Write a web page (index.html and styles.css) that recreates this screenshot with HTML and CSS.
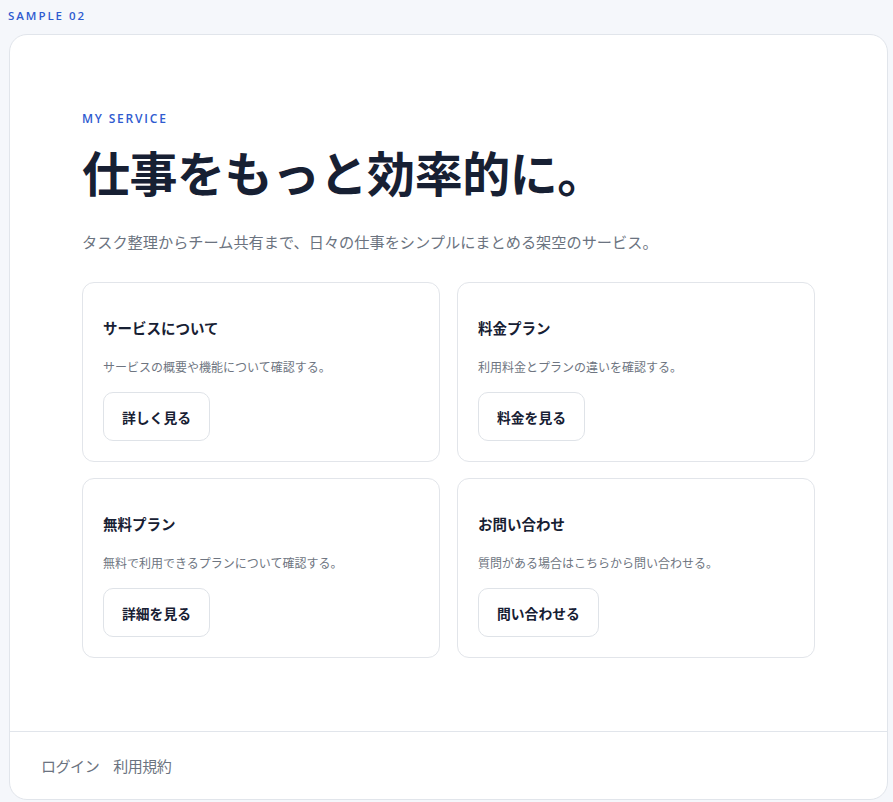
FILE: index.html
```html
<!DOCTYPE html>
<html lang="ja">
<head>
<meta charset="utf-8">
<title>Sample 02</title>
<link rel="stylesheet" href="styles.css">
</head>
<body>
<div class="sample-label">SAMPLE 02</div>
<div class="frame">
  <main class="main">
    <p class="eyebrow">MY SERVICE</p>
    <h1 class="title">仕事をもっと効率的に。</h1>
    <p class="lead">タスク整理からチーム共有まで、日々の仕事をシンプルにまとめる架空のサービス。</p>
    <div class="grid">
      <section class="card">
        <h2 class="card-title">サービスについて</h2>
        <p class="card-text">サービスの概要や機能について確認する。</p>
        <a class="btn">詳しく見る</a>
      </section>
      <section class="card">
        <h2 class="card-title">料金プラン</h2>
        <p class="card-text">利用料金とプランの違いを確認する。</p>
        <a class="btn">料金を見る</a>
      </section>
      <section class="card">
        <h2 class="card-title">無料プラン</h2>
        <p class="card-text">無料で利用できるプランについて確認する。</p>
        <a class="btn">詳細を見る</a>
      </section>
      <section class="card">
        <h2 class="card-title">お問い合わせ</h2>
        <p class="card-text">質問がある場合はこちらから問い合わせる。</p>
        <a class="btn">問い合わせる</a>
      </section>
    </div>
  </main>
  <footer class="footer">
    <a class="footer-link">ログイン</a>
    <a class="footer-link">利用規約</a>
  </footer>
</div>
</body>
</html>
```
FILE: styles.css
```css
* { box-sizing: border-box; }
html, body { margin: 0; padding: 0; }
body {
  background: #f5f7fb;
  font-family: "Noto Sans CJK JP", "Noto Sans", sans-serif;
  color: #172033;
  padding: 8px 5px 0 8px;
}
.sample-label {
  font-family: "Open Sans", "Noto Sans", sans-serif;
  font-size: 11.5px;
  font-weight: 600;
  letter-spacing: 0.17em;
  color: #2f5bd0;
  line-height: 16px;
  margin-bottom: 10px;
}
.frame {
  margin-left: 1px;
  width: 879px;
  height: 766px;
  background: #fff;
  border: 1px solid #e1e5eb;
  border-radius: 18px;
  display: flex;
  flex-direction: column;
}
.main {
  flex: 1;
  padding: 76px 72px 0 72px;
}
.eyebrow {
  margin: 0;
  font-family: "Open Sans", "Noto Sans", sans-serif;
  font-size: 12px;
  font-weight: 600;
  letter-spacing: 0.15em;
  color: #2f5bd0;
  line-height: 16px;
}
.title {
  margin: 12px 0 0;
  font-size: 48px;
  font-weight: 700;
  line-height: 64px;
  letter-spacing: -0.01em;
  color: #172033;
}
.lead {
  margin: 26px 0 0;
  font-size: 15.2px;
  line-height: 24px;
  color: #6b7380;
}
.grid {
  margin-top: 29px;
  display: grid;
  grid-template-columns: 1fr 1fr;
  gap: 16px 17px;
}
.card {
  border: 1px solid #e2e5ea;
  border-radius: 12px;
  padding: 34px 20px 20px;
  height: 180px;
}
.card-title {
  margin: 0;
  font-size: 14.5px;
  font-weight: 700;
  line-height: 22px;
  color: #172033;
}
.card-text {
  margin: 19px 0 0;
  font-size: 12px;
  line-height: 18px;
  color: #6e7581;
}
.btn {
  display: inline-flex;
  align-items: center;
  justify-content: center;
  margin-top: 16px;
  height: 49px;
  padding: 0 18px;
  border: 1px solid #dfe3e8;
  border-radius: 10px;
  font-size: 13.8px;
  font-weight: 700;
  color: #172033;
}
.footer {
  border-top: 1px solid #e1e5eb;
  height: 68px;
  display: flex;
  align-items: center;
  gap: 14px;
  padding: 0 31px 0;
}
.footer-link {
  font-size: 15px;
  letter-spacing: -0.03em;
  color: #6b7380;
}
```
